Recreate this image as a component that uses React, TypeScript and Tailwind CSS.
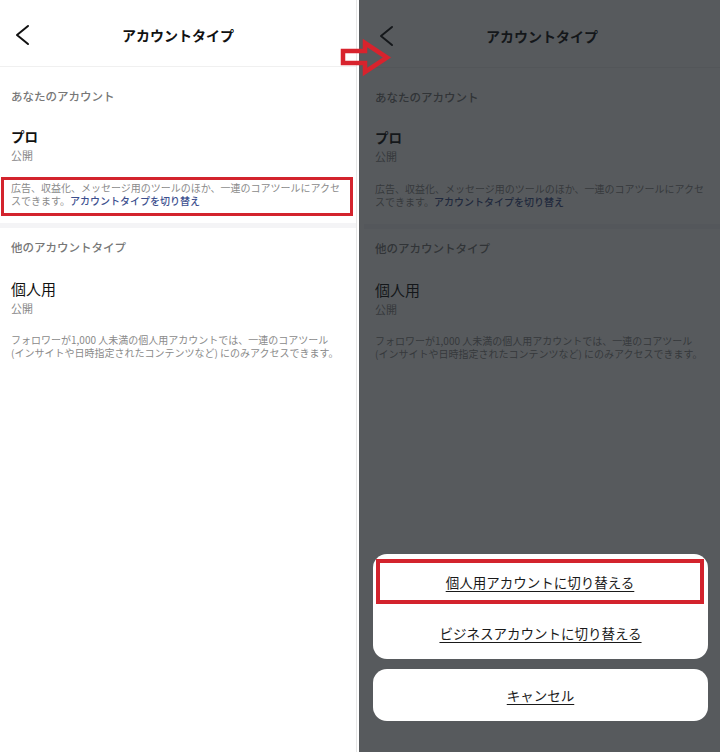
import React from "react";

const font = { fontFamily: '"Noto Sans CJK JP", "Noto Sans", sans-serif' };

function AccountScreen({ annotate }: { annotate: boolean }) {
  return (
    <div className="w-[356px] bg-white">
      <div className="grid h-[67px] grid-cols-[44px_1fr_44px] items-center border-b border-[#f0f0f0] pt-[4px]">
        <div className="pl-[15px]">
          <svg width="16" height="22" viewBox="0 0 16 22" fill="none">
            <polyline points="13,2 2,11 13,20" stroke="#111" strokeWidth="2" strokeLinecap="round" strokeLinejoin="round" />
          </svg>
        </div>
        <div className="text-center text-[14px] font-bold leading-[20px] text-[#111]">アカウントタイプ</div>
        <div />
      </div>

      <div className="px-[11px] pt-[21px] text-[11.5px] font-medium leading-[16px] text-[#777]">あなたのアカウント</div>
      <div className="mt-[22px] px-[11px] text-[13.5px] font-semibold leading-[20px] text-[#111]">プロ</div>
      <div className="mt-[1px] px-[11px] text-[11px] leading-[16px] text-[#888]">公開</div>

      <div
        className={
          annotate
            ? "mt-[14px] ml-[1px] w-[352px] border-[3px] border-[#d3232d] pt-[1px] pr-[4px] pb-[6px] pl-[7px] text-[10px] leading-[13px] text-[#8a8a8a]"
            : "mt-[14px] ml-[1px] w-[352px] border-[3px] border-transparent pt-[1px] pr-[4px] pb-[6px] pl-[7px] text-[10px] leading-[13px] text-[#8a8a8a]"
        }
      >
        広告、収益化、メッセージ用のツールのほか、一連のコアツールにアクセスできます。
        <span className="font-medium text-[#3c4f8e]">アカウントタイプを切り替え</span>
      </div>

      <div className="mt-[7px] h-[5px] bg-[#f4f4f6]" />

      <div className="mt-[11px] px-[11px] text-[11.5px] font-medium leading-[16px] text-[#777]">他のアカウントタイプ</div>
      <div className="mt-[24px] px-[11px] text-[15px] leading-[20px] text-[#111]">個人用</div>
      <div className="mt-[1px] px-[11px] text-[11px] leading-[16px] text-[#888]">公開</div>
      <div className="mt-[17px] px-[11px] text-[10px] leading-[13px] text-[#8a8a8a]">
        フォロワーが1,000 人未満の個人用アカウントでは、一連のコアツール
        <br />
        (インサイトや日時指定されたコンテンツなど) にのみアクセスできます。
      </div>
    </div>
  );
}

export default function App() {
  return (
    <div className="relative flex h-[752px] w-[720px] overflow-hidden bg-white" style={font}>
      <div className="h-full border-r border-[#e6e6e6]">
        <AccountScreen annotate />
      </div>
      <div className="w-[2px]" />

      <div className="relative h-full flex-1 bg-white pl-[5px] pt-[1px]">
        <AccountScreen annotate={false} />
        <div className="absolute inset-0 bg-[rgba(22,26,30,0.72)]" />

        <div className="absolute right-[12px] bottom-[31px] left-[14px] flex flex-col gap-[10px]">
          <div className="flex h-[105px] flex-col rounded-[14px] bg-white pt-[5px]">
            <div className="mx-[3px] mr-[4px] flex h-[45px] items-center justify-center border-[4px] border-[#d3232d]">
              <span className="text-[13.5px] leading-[20px] text-[#1a1a1a] underline underline-offset-[3px]">個人用アカウントに切り替える</span>
            </div>
            <div className="flex flex-1 items-center justify-center pt-[2px]">
              <span className="text-[13.5px] leading-[20px] text-[#1a1a1a] underline underline-offset-[3px]">ビジネスアカウントに切り替える</span>
            </div>
          </div>
          <div className="flex h-[52px] items-center justify-center rounded-[14px] bg-white">
            <span className="text-[13.5px] leading-[20px] text-[#1a1a1a] underline underline-offset-[3px]">キャンセル</span>
          </div>
        </div>
      </div>

      <svg className="absolute left-[338px] top-[38px]" width="56" height="40" viewBox="338 38 56 40" fill="none">
        <path d="M343 51 H365 V43 L387 57.5 L365 72 V63 H343 Z" stroke="#d8232d" strokeWidth="4.5" strokeLinejoin="miter" />
      </svg>
    </div>
  );
}
